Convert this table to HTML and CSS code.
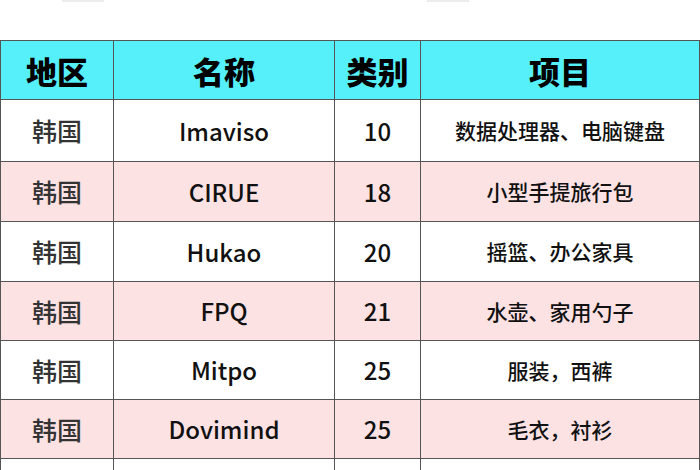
FILE: index.html
```html
<!DOCTYPE html>
<html lang="zh">
<head>
<meta charset="utf-8">
<link rel="stylesheet" href="styles.css">
</head>
<body>
<div class="top">
  <span class="ghost g1"></span>
  <span class="ghost g2"></span>
</div>
<table class="tbl">
  <colgroup>
    <col class="c1"><col class="c2"><col class="c3"><col class="c4">
  </colgroup>
  <thead>
    <tr class="head"><th>地区</th><th>名称</th><th>类别</th><th>项目</th></tr>
  </thead>
  <tbody>
    <tr class="r first"><td class="reg">韩国</td><td>Imaviso</td><td>10</td><td class="item">数据处理器、电脑键盘</td></tr>
    <tr class="r pink"><td class="reg">韩国</td><td>CIRUE</td><td>18</td><td class="item">小型手提旅行包</td></tr>
    <tr class="r"><td class="reg">韩国</td><td>Hukao</td><td>20</td><td class="item">摇篮、办公家具</td></tr>
    <tr class="r pink short"><td class="reg">韩国</td><td>FPQ</td><td>21</td><td class="item">水壶、家用勺子</td></tr>
    <tr class="r short"><td class="reg">韩国</td><td>Mitpo</td><td>25</td><td class="item">服装，西裤</td></tr>
    <tr class="r pink short"><td class="reg">韩国</td><td>Dovimind</td><td>25</td><td class="item">毛衣，衬衫</td></tr>
    <tr class="r last"><td class="reg"></td><td></td><td></td><td class="item"></td></tr>
  </tbody>
</table>
</body>
</html>
```

FILE: styles.css
```css
html, body {
  margin: 0;
  padding: 0;
  background: #ffffff;
  width: 700px;
  height: 470px;
  overflow: hidden;
  font-family: "Noto Sans CJK SC", "Noto Sans", sans-serif;
}
.top {
  height: 40px;
  display: flex;
  align-items: flex-start;
}
.ghost {
  display: block;
  height: 2px;
  background: #ececec;
}
.g1 { width: 42px; margin-left: 62px; }
.g2 { width: 42px; margin-left: 323px; }
.tbl {
  border-collapse: collapse;
  table-layout: fixed;
  width: 699px;
}
.c1 { width: 113px; }
.c2 { width: 221px; }
.c3 { width: 86px; }
.c4 { width: 279px; }
.tbl th, .tbl td {
  border: 1px solid #555555;
  padding: 0;
  text-align: center;
  vertical-align: middle;
}
.head th {
  background: #56f0fb;
  height: 58px;
  font-size: 31px;
  font-weight: 900;
  color: #000;
  line-height: 1;
}
.r td {
  height: 59px;
  font-size: 24px;
  font-weight: 500;
  color: #111;
  line-height: 1;
}
.r.first td { height: 61px; }
.r.short td { height: 58px; }
.r.last td { height: 14px; }
.r.pink td { background: #fde2e4; }
.r td.reg { color: #333; font-size: 25px; }
.r td.item { font-size: 21px; color: #111; }
```
